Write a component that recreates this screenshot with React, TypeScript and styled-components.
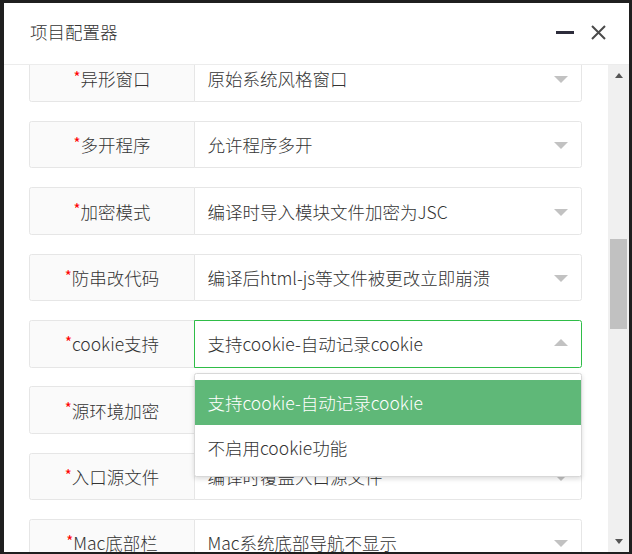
import styled, { createGlobalStyle, css } from 'styled-components';

const GlobalStyle = createGlobalStyle`
  html, body {
    margin: 0;
    padding: 0;
    background: #1f1f1f;
  }
  body {
    font-family: "Noto Sans CJK SC", "Noto Sans", sans-serif;
    font-weight: 300;
    color: #333;
  }
`;

const Screen = styled.div`
  height: 554px;
  box-sizing: border-box;
  padding: 3px 3px 2px 4px;
  display: flex;
`;

const Dialog = styled.div`
  flex: 1;
  display: flex;
  flex-direction: column;
  background: #fff;
  overflow: hidden;
`;

const Header = styled.div`
  height: 62px;
  flex-shrink: 0;
  display: flex;
  align-items: center;
  padding: 0 23px 4px 26px;
  box-sizing: border-box;
  border-bottom: 1px solid #ececec;
`;

const Title = styled.div`
  flex: 1;
  font-size: 17.5px;
  color: #333;
`;

const HeaderTools = styled.div`
  display: flex;
  align-items: center;
  gap: 17px;
  margin-top: 2px;
`;

const MinButton = styled.span`
  display: block;
  width: 18px;
  height: 3px;
  background: #2d2c3b;
`;

const Body = styled.div`
  flex: 1;
  min-height: 0;
  display: flex;
`;

const Content = styled.div`
  flex: 1;
  overflow: hidden;
  padding: 0 26.5px 0 25px;
`;

const Form = styled.div`
  margin-top: -10.5px;
  display: flex;
  flex-direction: column;
  gap: 18.9px;
`;

const Row = styled.div`
  display: flex;
  height: 47.5px;
`;

const Label = styled.div`
  width: 166px;
  flex-shrink: 0;
  box-sizing: border-box;
  border: 1px solid #e6e6e6;
  border-radius: 2.5px 0 0 2.5px;
  background: #fafafa;
  display: flex;
  align-items: center;
  justify-content: center;
  font-size: 17.5px;
  color: #333;
`;

const Star = styled.span`
  color: #ff0000;
  font-size: 15px;
  font-weight: 400;
  align-self: flex-start;
  margin-top: 10px;
  margin-right: 0;
`;

const Select = styled.div<{ $open?: boolean }>`
  flex: 1;
  position: relative;
  margin-left: -1px;
  box-sizing: border-box;
  border: 1px solid #e6e6e6;
  border-radius: 0 2.5px 2.5px 0;
  padding: 0 40px 0 12.5px;
  display: flex;
  align-items: center;
  font-size: 17.5px;
  color: #333;
  background: #fff;
  ${({ $open }) =>
    $open &&
    css`
      border-color: #2fbd48;
      z-index: 1;
    `}
`;

const Arrow = styled.span<{ $up?: boolean }>`
  position: absolute;
  right: 12.5px;
  top: 50%;
  width: 0;
  height: 0;
  border-left: 7px solid transparent;
  border-right: 7px solid transparent;
  ${({ $up }) =>
    $up
      ? css`
          border-bottom: 7px solid #c2c2c2;
          margin-top: -4.5px;
        `
      : css`
          border-top: 7px solid #c2c2c2;
          margin-top: -2.5px;
        `}
`;

const Menu = styled.div`
  position: absolute;
  top: 51.5px;
  left: -1px;
  width: calc(100% + 2px);
  box-sizing: border-box;
  padding: 6.25px 0;
  background: #fff;
  border: 1px solid #d8d8d8;
  border-radius: 2.5px;
  box-shadow: 0 2px 5px rgba(0, 0, 0, 0.14);
  z-index: 10;
`;

const Option = styled.div<{ $active?: boolean }>`
  height: 45px;
  line-height: 45px;
  padding: 0 12.5px;
  font-size: 17.5px;
  white-space: nowrap;
  color: ${({ $active }) => ($active ? '#fff' : '#333')};
  background: ${({ $active }) => ($active ? '#5fb878' : 'transparent')};
`;

const Scrollbar = styled.div`
  width: 21px;
  flex-shrink: 0;
  background: #f0f0f0;
  display: flex;
  flex-direction: column;
`;

const ScrollButton = styled.div<{ $down?: boolean }>`
  height: 21px;
  flex-shrink: 0;
  display: flex;
  align-items: center;
  justify-content: center;

  &::after {
    content: '';
    width: 0;
    height: 0;
    border-left: 4.5px solid transparent;
    border-right: 4.5px solid transparent;
    ${({ $down }) =>
      $down
        ? 'border-top: 5px solid #555;'
        : 'border-bottom: 5px solid #555;'}
  }
`;

const Track = styled.div`
  flex: 1;
  padding: 0 2px;
`;

const Thumb = styled.div`
  margin-top: 153px;
  height: 90px;
  background: #c1c1c1;
`;

type Field = {
  label: string;
  value: string;
  options?: string[];
};

const fields: Field[] = [
  { label: '异形窗口', value: '原始系统风格窗口' },
  { label: '多开程序', value: '允许程序多开' },
  { label: '加密模式', value: '编译时导入模块文件加密为JSC' },
  { label: '防串改代码', value: '编译后html-js等文件被更改立即崩溃' },
  {
    label: 'cookie支持',
    value: '支持cookie-自动记录cookie',
    options: ['支持cookie-自动记录cookie', '不启用cookie功能'],
  },
  { label: '源环境加密', value: '编译时加密源环境' },
  { label: '入口源文件', value: '编译时覆盖入口源文件' },
  { label: 'Mac底部栏', value: 'Mac系统底部导航不显示' },
];

const CloseIcon = () => (
  <svg width="15" height="15" viewBox="0 0 15 15">
    <path d="M1 1L14 14M14 1L1 14" stroke="#4a4a4a" strokeWidth="2" fill="none" />
  </svg>
);

export default function App() {
  return (
    <>
      <GlobalStyle />
      <Screen>
        <Dialog>
          <Header>
            <Title>项目配置器</Title>
            <HeaderTools>
              <MinButton />
              <CloseIcon />
            </HeaderTools>
          </Header>
          <Body>
            <Content>
              <Form>
                {fields.map((f) => (
                  <Row key={f.label}>
                    <Label>
                      <Star>*</Star>
                      {f.label}
                    </Label>
                    <Select $open={!!f.options}>
                      {f.value}
                      <Arrow $up={!!f.options} />
                      {f.options && (
                        <Menu>
                          {f.options.map((o) => (
                            <Option key={o} $active={o === f.value}>
                              {o}
                            </Option>
                          ))}
                        </Menu>
                      )}
                    </Select>
                  </Row>
                ))}
              </Form>
            </Content>
            <Scrollbar>
              <ScrollButton />
              <Track>
                <Thumb />
              </Track>
              <ScrollButton $down />
            </Scrollbar>
          </Body>
        </Dialog>
      </Screen>
    </>
  );
}
